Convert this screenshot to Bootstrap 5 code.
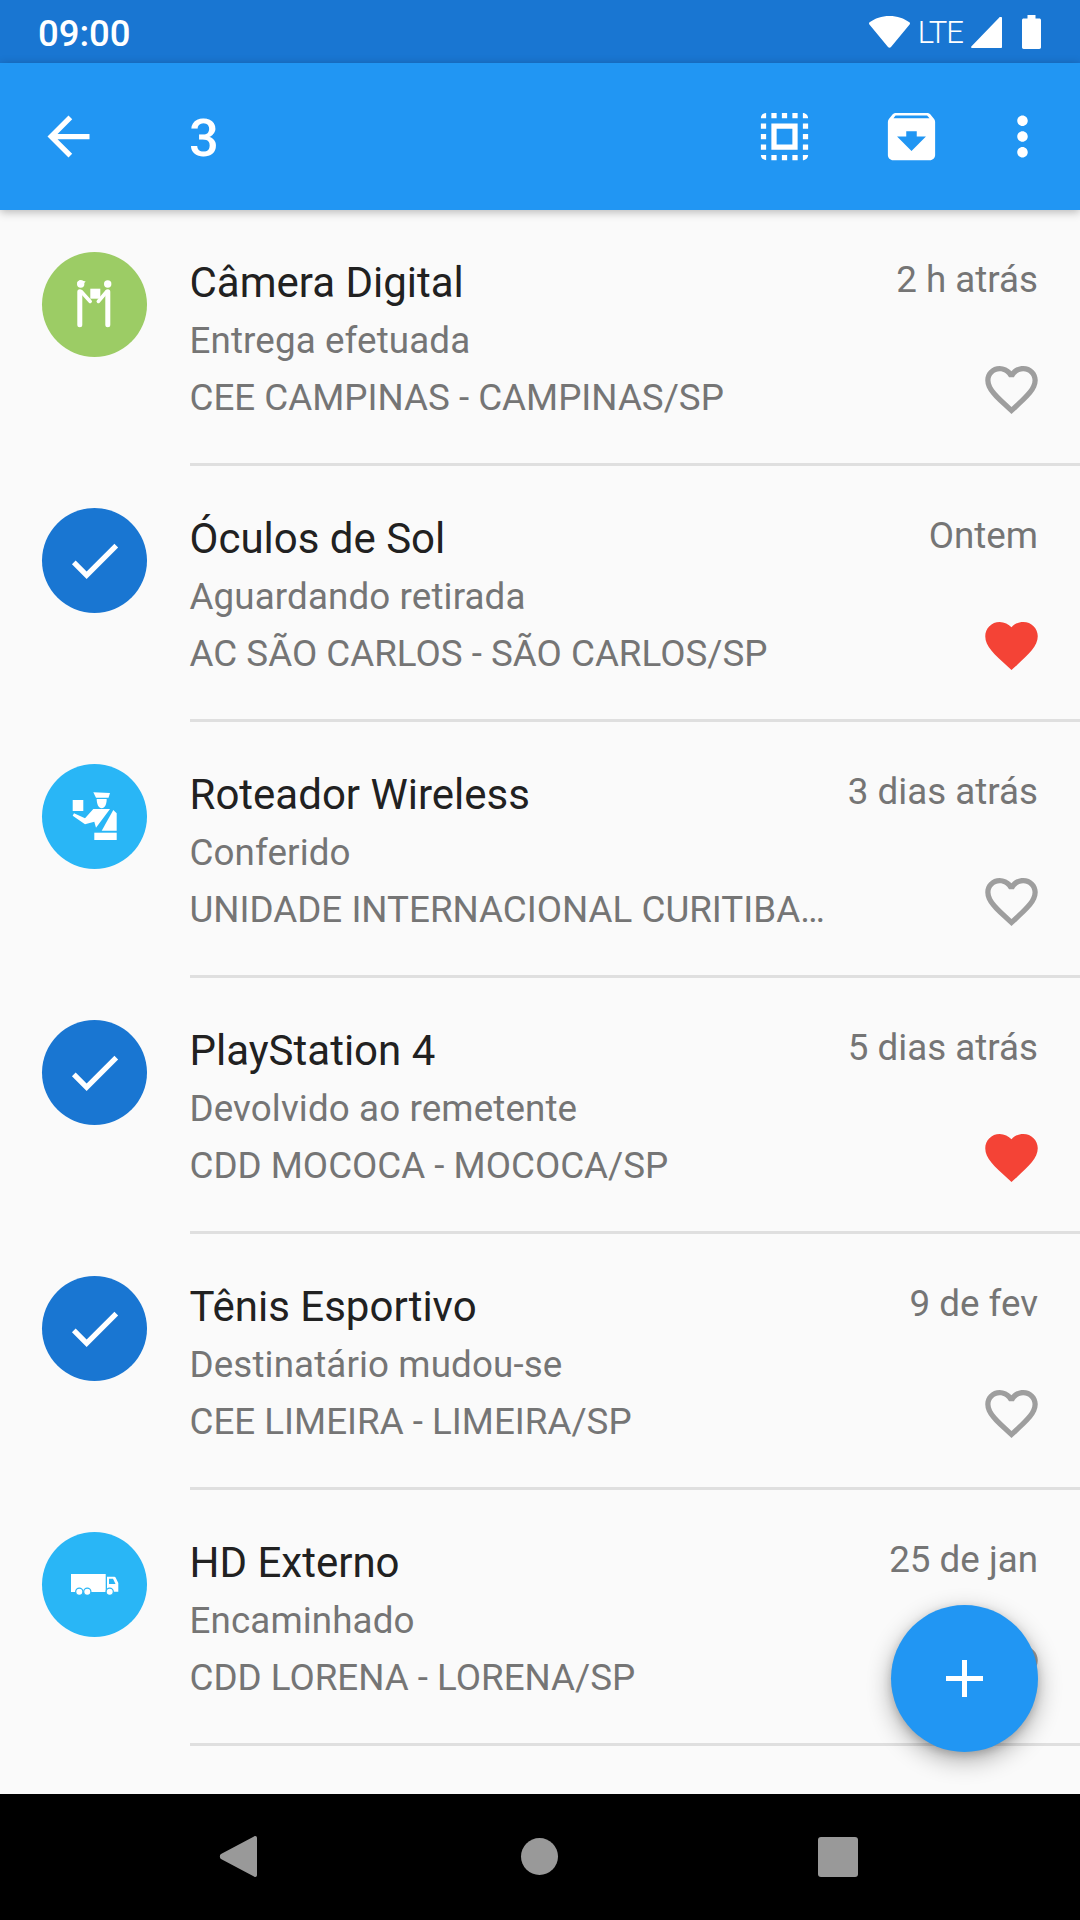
<!DOCTYPE html>
<html lang="pt-BR">
<head>
<meta charset="utf-8">
<title>Encomendas</title>
<link rel="stylesheet" href="https://cdn.jsdelivr.net/npm/bootstrap@5.3.0/dist/css/bootstrap.min.css">
<style>
html, body { height: 1920px; margin: 0; background: #fafafa; }
body { font-family: Roboto, "Liberation Sans", sans-serif; overflow: hidden; }
.screen { width: 1080px; height: 1920px; }
.status-strip { height: 63px; background: #1976d2; padding: 0 39px 0 38px; flex: none; }
.clock { font-size: 36.5px; font-weight: 500; line-height: 63px; padding-top: 3px; }
.net-label { font-size: 31px; line-height: 63px; margin: 0 8px 0 8px; padding-top: 1px; letter-spacing: -1px; font-weight: 300; }
.sig-shape { margin: 1px 20px 0 0; }
.app-strip { height: 147px; background: #2196f3; flex: none; z-index: 2; box-shadow: 0 2px 9px rgba(0,0,0,.28); padding: 0 26px 0 37px; }
.app-count { font-size: 52.5px; font-weight: 500; line-height: 1; margin-left: 89px; padding-top: 4px; }
.ico63 { width: 63px; height: 63px; display: block; flex: none; fill: currentColor; }
.gap-a { margin-left: 64px; }
.gap-b { margin-left: 48px; }
.feed { background: #fafafa; }
.feed-row { height: 256px; padding: 0 0 0 42px; background: transparent; border: 0; }
.avatar { width: 105px; height: 105px; border-radius: 50%; margin-top: 42px; flex: none; color: #fff; fill: currentColor; }
.avatar svg { display: block; }
.tone-green { background: #9ccc65; }
.tone-dark { background: #1976d2; }
.tone-sky { background: #29b6f6; }
.feed-body { margin-left: 42.5px; flex: 1; min-width: 0; border-bottom: 3px solid #dfdfdf; padding-top: 44px; padding-right: 42px; }
.col-text { width: 640px; min-width: 0; flex: none; }
.item-name { font-size: 42px; line-height: 57px; color: #212121; margin-bottom: 1px; }
.item-line { font-size: 36.75px; line-height: 57px; color: #757575; white-space: nowrap; }
.line-status { letter-spacing: .12px; }
.col-side { flex: 1; min-width: 0; }
.item-when { font-size: 36.75px; line-height: 52px; color: #757575; white-space: nowrap; }
.heart-off { color: #9e9e9e; margin: 52px -5px 0 0; }
.heart-on { color: #f44336; margin: 52px -5px 0 0; }
.fab-add { position: absolute; left: 891px; top: 1605px; width: 147px; height: 147px; border-radius: 50%; background: #2196f3; border: 0; padding: 0; color: #fff; box-shadow: 0 8px 24px rgba(0,0,0,.32), 0 3px 8px rgba(0,0,0,.16); z-index: 3; }
.sys-nav { height: 126px; background: #000; flex: none; position: relative; z-index: 4; }
.sys-nav svg { display: block; }
</style>
</head>
<body>
<div class="screen d-flex flex-column position-relative">

  <div class="status-strip d-flex align-items-center text-white">
    <span class="clock">09:00</span>
    <span class="flex-grow-1"></span>
    <svg width="41" height="32" viewBox="0 0 41 32" class="d-block" fill="#fff"><path d="M20.500 0C12.500 0 6 2.400 .6 6.300c-.7.500-.8 1.500-.2 2.100L19 31c.8.900 2.200.9 3 0L40.600 8.400c.6-.6.500-1.600-.2-2.100C35 2.400 28.500 0 20.500 0z"/></svg>
    <span class="net-label">LTE</span>
    <svg width="31" height="31" viewBox="0 0 31 31" class="d-block sig-shape" fill="#fff"><path d="M29 0h1c.6 0 1 .4 1 1v29c0 .6-.4 1-1 1H1c-.8 0-1.200-.8-.7-1.400L28.300.4c.2-.2.400-.4.700-.4z"/></svg>
    <svg width="19" height="34" viewBox="0 0 19 34" class="d-block" fill="#fff"><path d="M5.500 0h8v3.500h3.800c1 0 1.700.7 1.700 1.700v27.100c0 1-.7 1.700-1.700 1.700H1.700C.7 34 0 33.300 0 32.300V5.200c0-1 .7-1.700 1.700-1.700h3.800z"/></svg>
  </div>

  <div class="app-strip d-flex align-items-center text-white">
    <svg class="ico63" viewBox="0 0 24 24"><path d="M20 11H7.830l5.590-5.590L12 4l-8 8 8 8 1.410-1.410L7.830 13H20v-2z"/></svg>
    <span class="app-count">3</span>
    <span class="flex-grow-1"></span>
    <svg class="ico63" viewBox="0 0 24 24"><path d="M3 5h2V3c-1.100 0-2 .9-2 2zm0 8h2v-2H3v2zm4 8h2v-2H7v2zM3 9h2V7H3v2zm10-6h-2v2h2V3zm6 0v2h2c0-1.100-.9-2-2-2zM5 21v-2H3c0 1.100.9 2 2 2zm-2-4h2v-2H3v2zM9 3H7v2h2V3zm2 18h2v-2h-2v2zm8-8h2v-2h-2v2zm0 8c1.100 0 2-.9 2-2h-2v2zm0-12h2V7h-2v2zm0 8h2v-2h-2v2zm-4 4h2v-2h-2v2zm0-16h2V3h-2v2zM7 17h10V7H7v10zm2-8h6v6H9V9z"/></svg>
    <svg class="ico63 gap-a" viewBox="0 0 24 24"><path d="M20.540 5.230l-1.390-1.680C18.880 3.210 18.470 3 18 3H6c-.47 0-.88.21-1.160.55L3.460 5.230C3.170 5.570 3 6.020 3 6.500V19c0 1.100.9 2 2 2h14c1.100 0 2-.9 2-2V6.500c0-.48-.17-.93-.46-1.270zM12 17.500L6.500 12H10v-2h4v2h3.500L12 17.500zM5.120 5l.81-1h12l.94 1H5.120z"/></svg>
    <svg class="ico63 gap-b" viewBox="0 0 24 24"><path d="M12 8c1.100 0 2-.9 2-2s-.9-2-2-2-2 .9-2 2 .9 2 2 2zm0 2c-1.100 0-2 .9-2 2s.9 2 2 2 2-.9 2-2-.9-2-2-2zm0 6c-1.100 0-2 .9-2 2s.9 2 2 2 2-.9 2-2-.9-2-2-2z"/></svg>
  </div>

  <svg width="0" height="0" class="position-absolute">
    <defs>
      <path id="hr-off" d="M16.500 3c-1.740 0-3.410.81-4.500 2.090C10.910 3.810 9.240 3 7.500 3 4.420 3 2 5.420 2 8.500c0 3.780 3.400 6.860 8.550 11.540L12 21.350l1.450-1.320C18.600 15.360 22 12.280 22 8.500 22 5.420 19.580 3 16.500 3zm-4.400 15.550l-.1.1-.1-.1C7.140 14.240 4 11.390 4 8.500 4 6.500 5.500 5 7.500 5c1.540 0 3.040.99 3.570 2.360h1.870C13.460 5.990 14.960 5 16.500 5c2 0 3.500 1.500 3.500 3.500 0 2.890-3.140 5.740-7.900 10.050z"/>
      <path id="hr-on" d="M12 21.350l-1.450-1.320C5.400 15.360 2 12.280 2 8.500 2 5.420 4.420 3 7.500 3c1.740 0 3.410.81 4.500 2.090C13.090 3.810 14.760 3 16.500 3 19.580 3 22 5.420 22 8.500c0 3.780-3.400 6.860-8.550 11.540L12 21.350z"/>
      <path id="chk" d="M9 16.170L4.830 12l-1.420 1.410L9 19 21 7l-1.410-1.410z"/>
    </defs>
  </svg>

  <ul class="feed list-group list-group-flush flex-grow-1 overflow-hidden rounded-0">
    <li class="list-group-item feed-row d-flex">
      <div class="avatar tone-green">
        <svg width="105" height="105" viewBox="0 0 105 105">
          <circle cx="38.700" cy="32" r="3.700"/><path d="M35 30.500l3-2.500 5.700 1.500-2 2z"/>
          <circle cx="65.700" cy="32" r="3.700"/>
          <rect x="48.300" y="36.700" width="10" height="10"/>
          <path d="M37.800 39.800v33M65.800 39.800v33" stroke="#fff" stroke-width="5" stroke-linecap="round" fill="none"/>
          <path d="M39.200 39.500l9 10M64.800 39.500l-8.500 10" stroke="#fff" stroke-width="3.500" stroke-linecap="round" fill="none"/>
        </svg>
      </div>
      <div class="feed-body d-flex">
        <div class="col-text">
          <div class="item-name">Câmera Digital</div>
          <div class="item-line line-status">Entrega efetuada</div>
          <div class="item-line">CEE CAMPINAS - CAMPINAS/SP</div>
        </div>
        <div class="col-side d-flex flex-column align-items-end">
          <div class="item-when">2 h atrás</div>
          <svg class="ico63 heart-off" viewBox="0 0 24 24"><use href="#hr-off"/></svg>
        </div>
      </div>
    </li>
    <li class="list-group-item feed-row d-flex">
      <div class="avatar tone-dark"><svg width="105" height="105" viewBox="-8 -8 40 40"><use href="#chk"/></svg></div>
      <div class="feed-body d-flex">
        <div class="col-text">
          <div class="item-name">Óculos de Sol</div>
          <div class="item-line line-status">Aguardando retirada</div>
          <div class="item-line">AC SÃO CARLOS - SÃO CARLOS/SP</div>
        </div>
        <div class="col-side d-flex flex-column align-items-end">
          <div class="item-when">Ontem</div>
          <svg class="ico63 heart-on" viewBox="0 0 24 24"><use href="#hr-on"/></svg>
        </div>
      </div>
    </li>
    <li class="list-group-item feed-row d-flex">
      <div class="avatar tone-sky">
        <svg width="105" height="105" viewBox="0 0 105 105">
          <rect x="30.700" y="36" width="10.600" height="11"/>
          <path d="M51.300 28.300l16.700.7-1.500 4.700H54z"/>
          <path d="M54.700 35h10c0 5.500-2 9.300-5 9.300s-5-3.800-5-9.300z"/>
          <path d="M32 49.300l11 5 8.300-9.300H68L54 63.700l-1.700-6-9.300 2.600-12.300-8.600z"/>
          <path d="M71.300 46l3.400 3.300v17.400h-15z"/>
          <rect x="52.300" y="68.700" width="22.400" height="7.300"/>
        </svg>
      </div>
      <div class="feed-body d-flex">
        <div class="col-text">
          <div class="item-name">Roteador Wireless</div>
          <div class="item-line line-status">Conferido</div>
          <div class="item-line">UNIDADE INTERNACIONAL CURITIBA…</div>
        </div>
        <div class="col-side d-flex flex-column align-items-end">
          <div class="item-when">3 dias atrás</div>
          <svg class="ico63 heart-off" viewBox="0 0 24 24"><use href="#hr-off"/></svg>
        </div>
      </div>
    </li>
    <li class="list-group-item feed-row d-flex">
      <div class="avatar tone-dark"><svg width="105" height="105" viewBox="-8 -8 40 40"><use href="#chk"/></svg></div>
      <div class="feed-body d-flex">
        <div class="col-text">
          <div class="item-name">PlayStation 4</div>
          <div class="item-line line-status">Devolvido ao remetente</div>
          <div class="item-line">CDD MOCOCA - MOCOCA/SP</div>
        </div>
        <div class="col-side d-flex flex-column align-items-end">
          <div class="item-when">5 dias atrás</div>
          <svg class="ico63 heart-on" viewBox="0 0 24 24"><use href="#hr-on"/></svg>
        </div>
      </div>
    </li>
    <li class="list-group-item feed-row d-flex">
      <div class="avatar tone-dark"><svg width="105" height="105" viewBox="-8 -8 40 40"><use href="#chk"/></svg></div>
      <div class="feed-body d-flex">
        <div class="col-text">
          <div class="item-name">Tênis Esportivo</div>
          <div class="item-line line-status">Destinatário mudou-se</div>
          <div class="item-line">CEE LIMEIRA - LIMEIRA/SP</div>
        </div>
        <div class="col-side d-flex flex-column align-items-end">
          <div class="item-when">9 de fev</div>
          <svg class="ico63 heart-off" viewBox="0 0 24 24"><use href="#hr-off"/></svg>
        </div>
      </div>
    </li>
    <li class="list-group-item feed-row d-flex">
      <div class="avatar tone-sky">
        <svg width="105" height="105" viewBox="0 0 105 105">
          <rect x="29" y="42" width="34.700" height="18"/>
          <path fill-rule="evenodd" d="M65 44.700h7.300c.6 0 1 .3 1.300.8l2.700 5.500v8.700H65zm2 2v5.300h6.500l-2.500-5.300z"/>
          <g stroke="#29b6f6" stroke-width="1.200"><circle cx="37.300" cy="59.700" r="3.600"/><circle cx="45.300" cy="59.700" r="3.600"/><circle cx="67.700" cy="59.700" r="3.600"/></g>
        </svg>
      </div>
      <div class="feed-body d-flex">
        <div class="col-text">
          <div class="item-name">HD Externo</div>
          <div class="item-line line-status">Encaminhado</div>
          <div class="item-line">CDD LORENA - LORENA/SP</div>
        </div>
        <div class="col-side d-flex flex-column align-items-end">
          <div class="item-when">25 de jan</div>
          <svg class="ico63 heart-off" viewBox="0 0 24 24"><use href="#hr-off"/></svg>
        </div>
      </div>
    </li>
  </ul>

  <button type="button" class="fab-add d-flex align-items-center justify-content-center" aria-label="Adicionar">
    <svg width="37" height="37" viewBox="0 0 37 37" fill="#fff"><path d="M16 0h5v16h16v5H21v16h-5V21H0v-5h16z"/></svg>
  </button>

  <div class="sys-nav">
    <svg width="1080" height="126" viewBox="0 0 1080 126" fill="#999">
      <path d="M254 42.500c1.500-1.100 3-.3 3 1.500v37c0 1.800-1.500 2.600-3 1.500L221 65c-1.500-1-1.500-4 0-5z"/>
      <circle cx="539.500" cy="62.500" r="18.500"/>
      <rect x="818" y="43" width="40" height="40" rx="3"/>
    </svg>
  </div>
</div>
</body>
</html>
